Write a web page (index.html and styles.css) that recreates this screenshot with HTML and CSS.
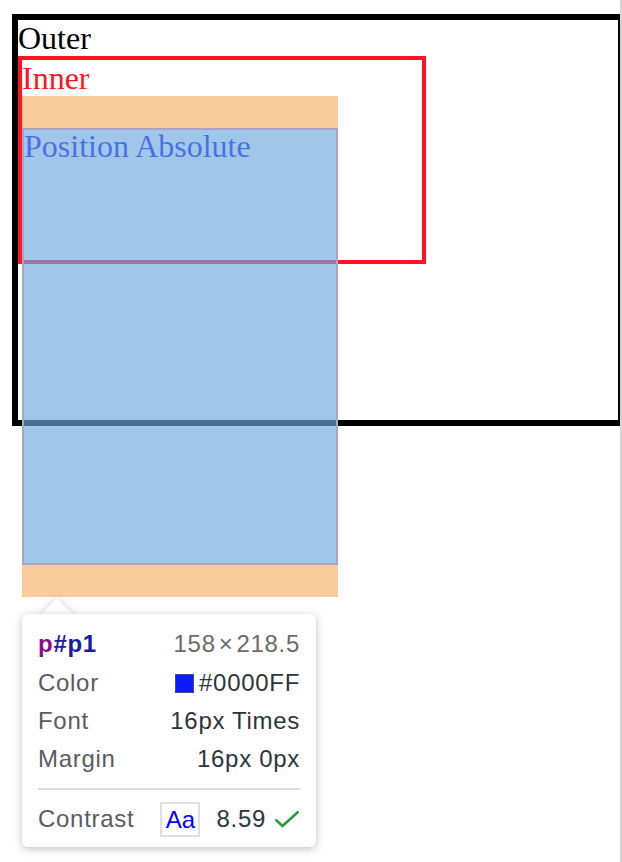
FILE: index.html
```html
<!DOCTYPE html>
<html>
<head>
<meta charset="utf-8">
<link rel="stylesheet" href="styles.css">
</head>
<body>
<div class="viewport">
  <div class="page">
    <div class="outer">
      <div class="line">Outer</div>
      <div class="inner">
        <div class="line red">Inner</div>
        <p class="abs">Position Absolute</p>
      </div>
    </div>
  </div>
  <div class="hl"></div>
  <div class="tip">
    <div class="arrow"></div>
    <div class="tip-body">
      <div class="row head">
        <span class="sel"><span class="tag">p</span><span class="id">#p1</span></span>
        <span class="dims">158<span class="x">×</span>218.5</span>
      </div>
      <div class="row">
        <span class="label">Color</span>
        <span class="val"><span class="swatch"></span>#0000FF</span>
      </div>
      <div class="row">
        <span class="label">Font</span>
        <span class="val">16px Times</span>
      </div>
      <div class="row">
        <span class="label">Margin</span>
        <span class="val">16px 0px</span>
      </div>
      <div class="divider"></div>
      <div class="row">
        <span class="label">Contrast</span>
        <span class="val contrast">
          <span class="aa">Aa</span>
          <span class="ratio">8.59</span>
          <svg class="check" width="26" height="18" viewBox="0 0 26 18"><path d="M1.5 9.5 L8.5 16 L24.5 1.5" fill="none" stroke="#1f9d38" stroke-width="2.4"/></svg>
        </span>
      </div>
    </div>
  </div>
</div>
</body>
</html>
```

FILE: styles.css
```css
html, body {
  margin: 0;
  padding: 0;
  background: #fff;
}

.viewport {
  position: relative;
  width: 620px;
  height: 862px;
  overflow: hidden;
  border-right: 2px solid #d3d3d3;
}

.page {
  padding: 14px 0 0 12px;
  font-family: "Liberation Serif", "Times New Roman", serif;
  font-size: 32px;
}

.line {
  line-height: 36px;
  height: 36px;
  color: #000;
}

.red {
  color: #ff1424;
}

.outer {
  box-sizing: border-box;
  width: 612px;
  height: 412px;
  border: 6px solid #000;
}

.inner {
  position: relative;
  box-sizing: border-box;
  width: 408px;
  height: 208px;
  border: 4px solid #ff1424;
}

.abs {
  position: absolute;
  left: 0;
  top: 36px;
  margin: 32px 0;
  width: 314px;
  height: 437px;
  padding-left: 2px;
  line-height: 36px;
  color: #0000ff;
}

.hl {
  position: absolute;
  left: 22px;
  top: 96px;
  width: 316px;
  height: 437px;
  border-top: 32px solid rgba(246, 178, 107, 0.66);
  border-bottom: 32px solid rgba(246, 178, 107, 0.66);
  background: rgba(111, 168, 220, 0.66);
  background-clip: padding-box;
  box-shadow: inset 0 0 0 2px #a9a3c7;
  pointer-events: none;
}

.tip {
  position: absolute;
  left: 22px;
  top: 614px;
  width: 294px;
  font-family: "Liberation Sans", Arial, sans-serif;
  font-size: 24px;
  letter-spacing: 0.7px;
}

.arrow {
  position: absolute;
  left: 24px;
  top: -11px;
  width: 22px;
  height: 22px;
  background: #fff;
  transform: rotate(45deg);
  box-shadow: 0 0 8px rgba(0, 0, 0, 0.18);
}

.tip-body {
  position: relative;
  background: #fff;
  border-radius: 6px;
  box-shadow: 0 2px 9px rgba(0, 0, 0, 0.26);
  padding: 10px 16px 9px;
}

.row {
  display: flex;
  justify-content: space-between;
  align-items: center;
  height: 38px;
  line-height: 38px;
  white-space: nowrap;
}

.row.head {
  height: 40px;
  line-height: 40px;
}

.sel {
  font-weight: bold;
}

.tag {
  color: #881280;
}

.id {
  color: #1a1aa6;
}

.dims {
  color: #6a6a6a;
}

.x {
  margin: 0 3px;
}

.label {
  color: #5a5b5f;
}

.val {
  color: #2c353e;
  display: flex;
  align-items: center;
}

.swatch {
  display: inline-block;
  box-sizing: border-box;
  width: 19px;
  height: 19px;
  background: #0a1cff;
  border: 1px solid #4a4a80;
  margin-right: 5px;
}

.divider {
  height: 2px;
  background: #dcdcdc;
  margin: 10px 0;
}

.aa {
  box-sizing: border-box;
  width: 40px;
  height: 35px;
  line-height: 31px;
  border: 2px solid #e0e0e0;
  color: #0000ff;
  text-align: center;
  letter-spacing: 0;
}

.ratio {
  margin-left: 16px;
}

.check {
  margin-left: 8px;
  display: block;
}
```
